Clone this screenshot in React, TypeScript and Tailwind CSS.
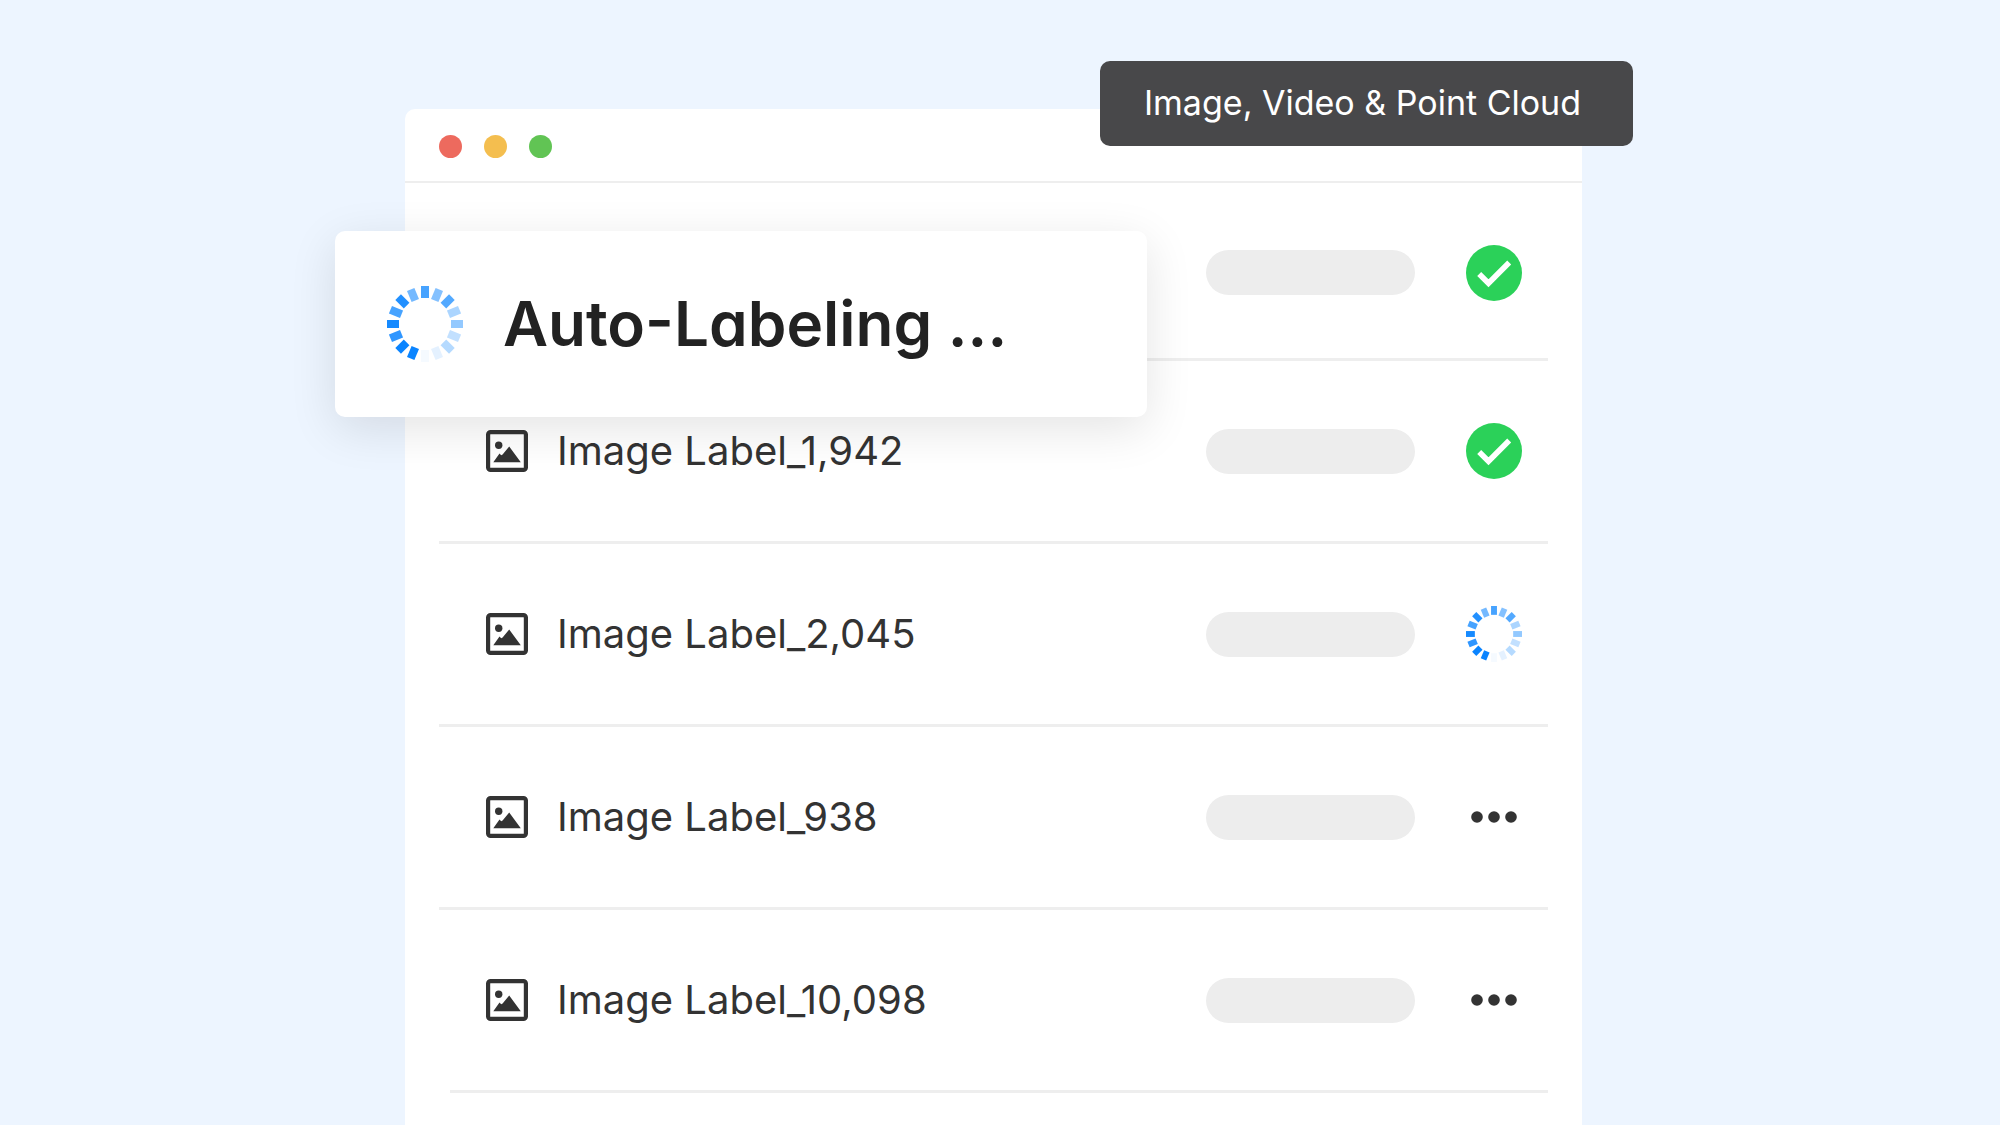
import clsx from "clsx";

type Status = "done" | "loading" | "pending";

const rows: { label?: string; status: Status }[] = [
  { status: "done" },
  { label: "Image Label_1,942", status: "done" },
  { label: "Image Label_2,045", status: "loading" },
  { label: "Image Label_938", status: "pending" },
  { label: "Image Label_10,098", status: "pending" },
];

// opacity of each spinner tick, clockwise from 12 o'clock
const ticks = [0.75, 0.5, 0.7, 0.34, 0.44, 0.25, 0.3, 0.11, 0.04, 1, 1, 0.85, 0.95, 0.75, 0.9, 0.57];

function Spinner({ className }: { className?: string }) {
  return (
    <svg viewBox="0 0 76 76" className={clsx("shrink-0", className)} role="img" aria-label="In progress">
      {ticks.map((opacity, i) => (
        <rect
          key={i}
          x="34"
          y={i % 2 ? 0.6 : 0}
          width="8"
          height="12"
          fill="#0a84ff"
          opacity={opacity}
          transform={`rotate(${i * 22.5} 38 38)`}
        />
      ))}
    </svg>
  );
}

function ImageIcon() {
  return (
    <svg viewBox="0 0 42 42" className="size-[42px] shrink-0" aria-hidden="true">
      <rect x="2.1" y="2.1" width="37.8" height="37.8" rx="2.5" fill="none" stroke="#333333" strokeWidth="4.2" />
      <circle cx="12.7" cy="15.2" r="3.7" fill="#333333" />
      <path d="M7.3 32.2 L13.5 23.4 L15.2 25.2 L16.6 24.4 L23.2 16.6 L34.8 32.2 Z" fill="#333333" />
    </svg>
  );
}

function StatusIcon({ status }: { status: Status }) {
  if (status === "loading") return <Spinner className="size-14" />;
  if (status === "done") {
    return (
      <svg viewBox="0 0 56 56" className="size-14 shrink-0" role="img" aria-label="Done">
        <circle cx="28" cy="28" r="28" fill="#2bd159" />
        <path d="M13.2 29 L22.5 38.3 L43.2 17.6" fill="none" stroke="#ffffff" strokeWidth="5.6" />
      </svg>
    );
  }
  return (
    <svg viewBox="0 0 56 56" className="size-14 shrink-0" role="img" aria-label="Pending">
      <circle cx="11" cy="28" r="5.8" fill="#333333" />
      <circle cx="28" cy="28" r="5.8" fill="#333333" />
      <circle cx="45" cy="28" r="5.8" fill="#333333" />
    </svg>
  );
}

export default function App() {
  return (
    <main className="flex min-h-screen overflow-hidden bg-[#edf5ff] pt-[109px] pr-[20.9%] pl-[20.25%] font-['Inter',sans-serif] text-[#333333]">
      <section className="relative flex-1 rounded-t-[10px] bg-white">
        <header className="flex h-[74px] items-center gap-[22px] border-b-2 border-[#eeeeee] px-[34px] pt-0.5">
          <span className="size-[23px] rounded-full bg-[#ed6a5e]" />
          <span className="size-[23px] rounded-full bg-[#f4be4f]" />
          <span className="size-[23px] rounded-full bg-[#61c454]" />
        </header>

        <ul className="px-[34px] pt-1">
          {rows.map((row, i) => (
            <li
              key={i}
              className={clsx(
                "flex items-center border-b-[3px] border-[#eeeeee] pr-[26px]",
                i === 0 ? "h-[174px]" : "h-[183px]",
                i === rows.length - 1 ? "ml-[11px] pl-9" : "pl-[47px]",
              )}
            >
              {row.label && (
                <>
                  <ImageIcon />
                  <span className="ml-[29px] text-[40px] leading-[48px]">{row.label}</span>
                </>
              )}
              <span className="ml-auto h-[45px] w-[209px] rounded-full bg-[#ededed]" />
              <span className="ml-[51px]">
                <StatusIcon status={row.status} />
              </span>
            </li>
          ))}
        </ul>

        <div className="absolute top-[122px] -left-[70px] flex h-[186px] w-[812px] items-center gap-10 rounded-[10px] bg-white px-[52px] shadow-[0_12px_48px_rgba(0,0,0,0.11)]">
          <Spinner className="size-[76px]" />
          <h1 className="text-[62px] leading-[72px] font-semibold text-[#222222] [font-feature-settings:'cv11','case']">
            Auto-Labeling ...
          </h1>
        </div>

        <div className="absolute -top-12 -right-[51px] flex h-[85px] w-[533px] items-center justify-center rounded-[10px] bg-[#48484a] pr-2 pb-0.5 text-[34px] leading-[40px] whitespace-nowrap text-white">
          Image, Video &amp; Point Cloud
        </div>
      </section>
    </main>
  );
}
